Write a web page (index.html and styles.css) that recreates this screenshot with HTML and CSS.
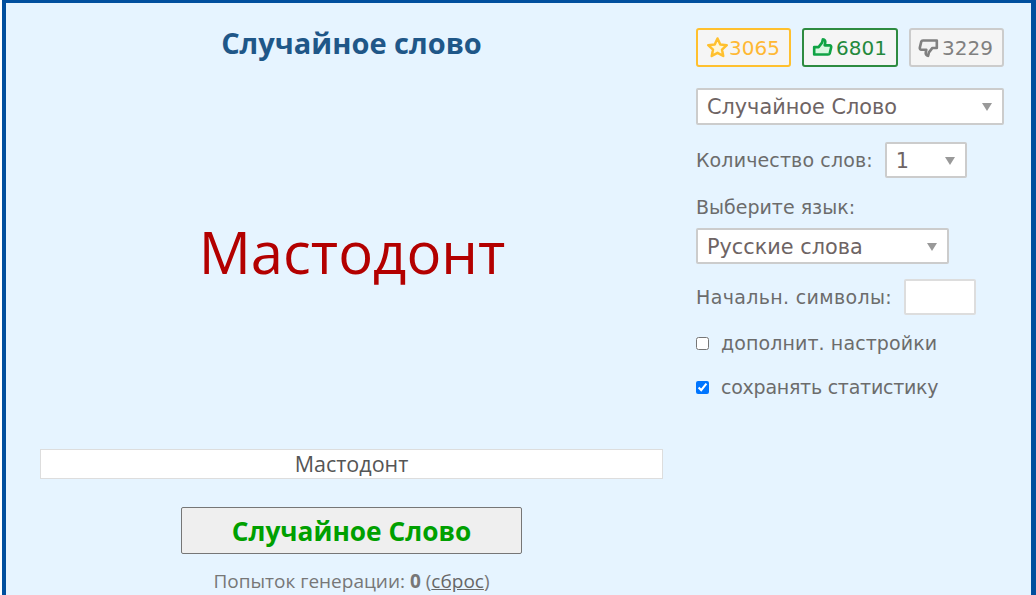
FILE: index.html
```html
<!DOCTYPE html>
<html lang="ru">
<head>
  <meta charset="UTF-8" />
  <title>Случайное слово</title>
  <link rel="stylesheet" href="styles.css">
</head>
<body>

<div class="page">
  <!-- Generator -->
  <div class="main">
    <h1>Случайное слово</h1>
    <div class="word">Мастодонт</div>
    <div class="result">Мастодонт</div>
    <button class="generate">Случайное Слово</button>
    <p class="attempts">Попыток генерации: <b>0</b> (<a href="#">сброс</a>)</p>
  </div>

  <!-- Settings -->
  <div class="side">
    <div class="votes">
      <div class="vote fav">
        <svg width="23" height="23" viewBox="0 0 24 24"><path d="M12 2.600l2.900 6.200 6.800.8-5 4.600 1.300 6.700-6-3.300-6 3.300 1.300-6.700-5-4.600 6.800-.8z" fill="#fff6d8" stroke="#ffc02e" stroke-width="2.600" stroke-linejoin="round"/></svg>3065
      </div>
      <div class="vote like">
        <svg width="21" height="21" viewBox="0 0 24 24"><path d="M2.500 11.500h5l4-5 1-4c2.200 0 3 2 2.600 4l-.6 3h5.700c1.300 0 2 1.100 1.700 2.300l-1.600 6.800c-.3 1-1 1.400-2 1.400H2.500z" fill="#d8f8e0" stroke="#0fa344" stroke-width="3" stroke-linejoin="round"/></svg>6801
      </div>
      <div class="vote dislike">
        <svg width="21" height="21" viewBox="0 0 24 24"><path d="M21.500 12.500h-5l-4 5-1 4c-2.200 0-3-2-2.600-4l.6-3H3.800c-1.300 0-2-1.100-1.700-2.300l1.600-6.800c.3-1 1-1.400 2-1.400h15.800z" fill="#f2f2f2" stroke="#808080" stroke-width="3" stroke-linejoin="round"/></svg>3229
      </div>
    </div>

    <div class="select select-full">Случайное Слово</div>

    <div class="row row-count">
      <span>Количество слов:</span>
      <div class="select select-count">1</div>
    </div>

    <div class="lang-label">Выберите язык:</div>
    <div class="select select-lang">Русские слова</div>

    <div class="row row-start">
      <span>Начальн. символы:</span>
      <input class="start" type="text">
    </div>

    <label class="check check-extra"><input type="checkbox"> дополнит. настройки</label>
    <label class="check check-stats"><input type="checkbox" checked> сохранять статистику</label>
  </div>
</div>

</body>
</html>
```

FILE: styles.css
```css
* { box-sizing: border-box; margin: 0; padding: 0; }
html, body { height: 100%; overflow: hidden; background: #fff; }
body { font-family: 'DejaVu Sans', sans-serif; color: #666; padding-left: 2px; }

.page { display: flex; height: 595px; background: #e6f4ff; border: solid #004f9e; border-width: 3px 5px 0 4px; }

.main { width: 623px; margin-left: 34px; display: flex; flex-direction: column; align-items: center; font-family: 'Open Sans', sans-serif; }
.main h1 { font-size: 29px; font-weight: 700; line-height: 38px; margin-top: 21px; color: #1f5788; }
.word { font-size: 58px; line-height: 84px; margin-top: 148px; padding-left: 1px; color: #b30000; }
.result { width: 100%; height: 30px; margin-top: 155px; background: #fff; border: 1px solid #ddd; text-align: center; font-size: 21.500px; line-height: 28px; color: #555; }
.generate { width: 341px; height: 47px; margin-top: 28px; background: #efefef; border: 1px solid #767676; border-radius: 2px; font-family: 'Open Sans', sans-serif; font-size: 26.300px; font-weight: 700; color: #00a000; }
.attempts { font-size: 19px; line-height: 24px; margin-top: 15px; color: #777; }
.attempts a { color: #666; }

.side { width: 308px; margin-left: 33px; padding-top: 25px; font-size: 19px; color: #6c6c6c; }
.votes { display: flex; justify-content: space-between; }
.vote { display: flex; align-items: center; height: 39px; padding: 0 0 0 8px; background: #f5f5f5; border: 2px solid #ccc; border-radius: 3px; font-size: 20px; }
.vote svg { flex-shrink: 0; }
.vote.fav { width: 95px; border-color: #ffc02e; color: #ffb833; }
.vote.like { width: 96px; border-color: #2e8b40; color: #24893c; }
.vote.like svg { margin-right: 3px; }
.vote.dislike { width: 95px; padding-left: 7px; color: #808080; }
.vote.dislike svg { margin-right: 3px; }

.select { position: relative; height: 36px; padding-left: 9px; background: #fff; border: 2px solid #ccc; border-radius: 2px; font-size: 20.800px; line-height: 34px; color: #6e6464; }
.select::after { content: ""; position: absolute; right: 10px; top: 13px; border: solid transparent; border-width: 8px 5.500px 0; border-top-color: #999; }
.select-full { height: 37px; margin-top: 21px; }
.select-count { width: 82px; }
.select-lang { width: 253px; margin-top: 9px; }

.row { display: flex; align-items: center; }
.row-count { margin-top: 17px; gap: 12px; letter-spacing: 0.130px; }
.lang-label { margin-top: 17px; line-height: 24px; }
.row-start { margin-top: 15px; gap: 12px; letter-spacing: 0.350px; }
.start { width: 72px; height: 36px; background: #fff; border: 2px solid #ddd; border-radius: 2px; }

.check { display: flex; align-items: center; gap: 12px; line-height: 24px; }
.check input { width: 13px; height: 13px; accent-color: #0075ff; }
.check-extra { margin-top: 16px; letter-spacing: 0.100px; }
.check-stats { margin-top: 20px; letter-spacing: -0.250px; }
```
